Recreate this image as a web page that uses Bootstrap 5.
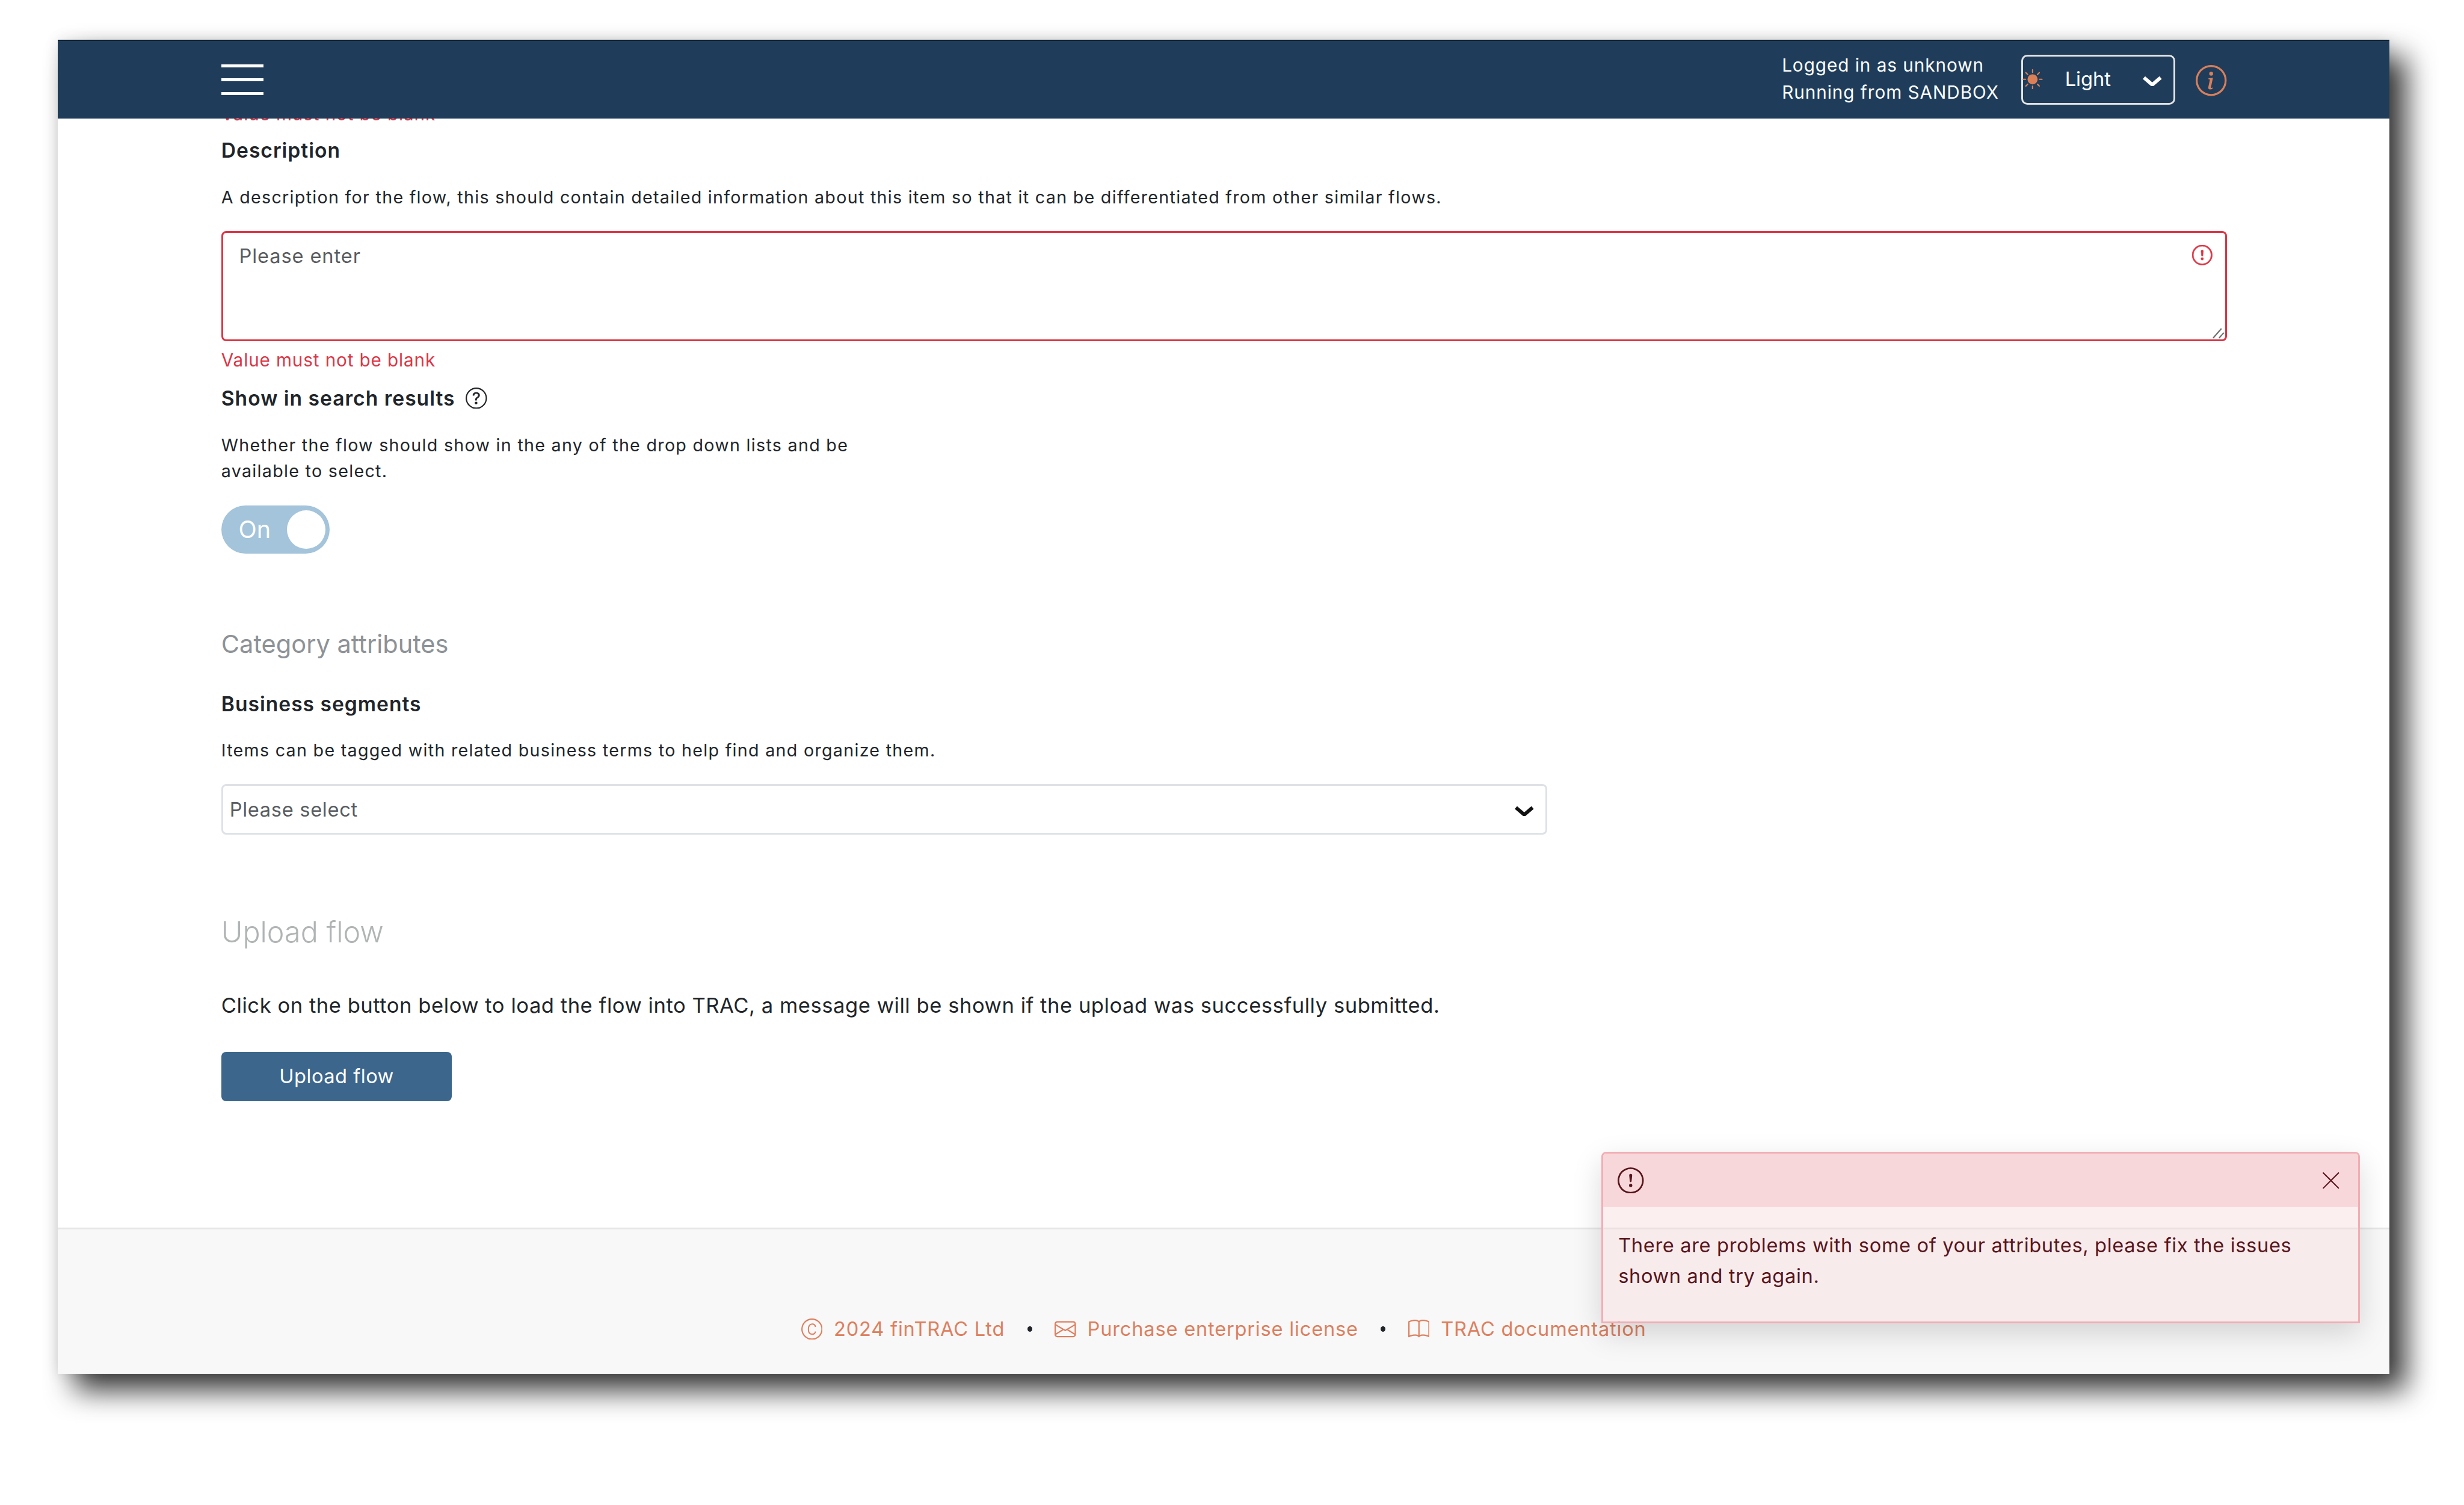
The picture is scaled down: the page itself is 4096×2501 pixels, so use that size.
<!DOCTYPE html>
<html lang="en">
<head>
<meta charset="utf-8">
<title>Upload flow</title>
<link href="https://cdn.jsdelivr.net/npm/bootstrap@5.3.0/dist/css/bootstrap.min.css" rel="stylesheet">
<style>
html,body{height:100%;}
body{zoom:.98866;background:#fff;font-family:Inter,"Liberation Sans",sans-serif;color:#212529;overflow:hidden;padding:67px 0 0 97px;font-size:28px;}
.app-win{width:3921px;height:2242px;background:#fff;box-shadow:28px 28px 46px rgba(0,0,0,.8),0 0 22px rgba(0,0,0,.1);}
.top-bar{height:132px;background:#1f3d5a;border-top:2.1px solid #0d1f30;padding:0 274px 0 275px;flex:none;z-index:2;}
.burger{width:71px;gap:18px;}
.burger span{height:5.1px;background:#fff;display:block;}
.user-info{color:#fff;font-size:30px;line-height:46px;margin:-3px 38px 0 0;letter-spacing:1px;}
.theme-btn{width:258px;height:84px;border:3.1px solid #e3e3e3;border-radius:10px;color:#fff;font-size:33px;padding:0;margin-right:35px;position:relative;}
.theme-sun{position:absolute;left:-1px;top:21px;width:34px;height:34px;fill:#dd7f56;}
.theme-label{margin-left:70px;margin-top:-2px;}
.theme-chev{position:absolute;left:201px;top:32px;width:32px;height:18px;fill:none;stroke:#fff;stroke-width:6;}
.info-ico{width:52px;height:52px;fill:#d97f5a;display:block;margin-top:3px;}
.page-body{padding:0 274px 0 275px;overflow:hidden;min-height:0;}
.cut-msg{color:#dc3545;font-size:30px;letter-spacing:.9px;line-height:44px;margin-top:-29px;}
.fld-title{font-size:34px;letter-spacing:1px;font-weight:600;line-height:44px;}
.fld-help{font-size:29px;line-height:44px;letter-spacing:1.3px;}
.t-desc{margin-top:17px;}
.h-desc{margin-top:35px;}
.area-wrap{margin-top:34px;height:186px;}
.area-wrap .form-control{height:186px;border:3.1px solid #dc3545;border-radius:8px;background-image:none;font-size:33px;letter-spacing:.9px;padding:15px 27px;box-shadow:none;resize:none;}
.area-wrap .form-control::placeholder{color:#595c5f;}
.area-ico{position:absolute;right:24px;top:24px;width:34px;height:34px;fill:#dc3545;stroke:#dc3545;stroke-width:.3;}
.area-grip{position:absolute;right:3px;bottom:5px;width:22px;height:18px;fill:none;stroke:#6f6f6f;stroke-width:2.2;}
.err-msg{color:#dc3545;font-size:30px;letter-spacing:.9px;line-height:44px;margin-top:10px;}
.t-show{margin-top:19px;gap:18px;}
.q-ico{width:36px;height:36px;fill:#212529;}
.h-show{margin-top:35px;max-width:1120px;}
.pill{width:182px;height:81px;border-radius:41px;background:#a3c4da;color:#fff;font-size:40px;margin-top:36px;padding:0 7px 0 29px;}
.pill-knob{width:65px;height:65px;border-radius:50%;background:#fff;}
.sect-title{font-size:42px;line-height:60px;color:#8d9296;margin-top:122px;font-weight:400;}
.t-biz{margin-top:48px;}
.h-biz{margin-top:34px;}
.sel-wrap{margin-top:35px;width:2230px;height:85px;}
.sel-wrap .form-select{height:85px;border:3.1px solid #dee2e6;border-radius:8px;font-size:33px;letter-spacing:.7px;padding:0 11px;background-image:none;color:#595c5f;}
.sel-chev{position:absolute;right:23px;top:36px;width:32px;height:18px;fill:none;stroke:#111;stroke-width:6;}
.up-title{font-size:49px;line-height:70px;color:#b0b4b4;margin-top:128px;font-weight:300;}
.up-help{font-size:35px;line-height:56px;margin-top:61px;letter-spacing:.53px;}
.up-btn{width:388px;height:83px;margin-top:50px;background:#3c668c;border:0;border-radius:8px;color:#fff;font-size:33px;letter-spacing:.5px;padding:0;}
.foot{height:246px;background:#f8f8f8;border-top:3.1px solid #e6e6e6;padding-top:93px;flex:none;color:#dd7f5f;font-size:33px;letter-spacing:.8px;}
.foot-link{color:#dd7f5f;text-decoration:none;gap:19px;}
.foot-ico{width:36px;height:36px;fill:#dd7f5f;}
.foot-dot{width:8px;height:9px;border-radius:50%;background:#212529;margin:0 38px;}
.alert-toast{position:absolute;left:2596px;top:1869px;width:1275px;height:288px;border:3.1px solid #f1aeb5;border-radius:8px 8px 0 0;background:rgba(248,215,218,.4);color:#58151c;font-size:33px;letter-spacing:.65px;box-shadow:0 18px 50px rgba(0,0,0,.15);}
.alert-toast .toast-header{height:90px;background:#f8d7da;color:#58151c;border:0;padding:0 24px;border-radius:5px 5px 0 0;}
.alert-toast .toast-body{padding:38px 24px 37px 25px;line-height:52px;}
.toast-ico{width:44px;height:44px;fill:#58151c;}
.toast-x{width:40px;height:40px;fill:#58151c;margin-right:2px;}
</style>
</head>
<body>
<div class="app-win d-flex flex-column position-relative">
  <nav class="top-bar d-flex align-items-center">
    <div class="burger d-flex flex-column"><span></span><span></span><span></span></div>
    <div class="ms-auto user-info"><div>Logged in as unknown</div><div>Running from SANDBOX</div></div>
    <button type="button" class="btn theme-btn d-flex align-items-center">
      <svg class="theme-sun" viewBox="0 0 16 16"><path d="M8 12a4 4 0 1 0 0-8 4 4 0 0 0 0 8zM8 0a.5.5 0 0 1 .5.5v2a.5.5 0 0 1-1 0v-2A.5.5 0 0 1 8 0zm0 13a.5.5 0 0 1 .5.5v2a.5.5 0 0 1-1 0v-2A.5.5 0 0 1 8 13zm8-5a.5.5 0 0 1-.5.5h-2a.5.5 0 0 1 0-1h2a.5.5 0 0 1 .5.5zM3 8a.5.5 0 0 1-.5.5h-2a.5.5 0 0 1 0-1h2A.5.5 0 0 1 3 8zm10.657-5.657a.5.5 0 0 1 0 .707l-1.414 1.415a.5.5 0 1 1-.707-.708l1.414-1.414a.5.5 0 0 1 .707 0zm-9.193 9.193a.5.5 0 0 1 0 .707L3.05 13.657a.5.5 0 0 1-.707-.707l1.414-1.414a.5.5 0 0 1 .707 0zm9.193 2.121a.5.5 0 0 1-.707 0l-1.414-1.414a.5.5 0 0 1 .707-.707l1.414 1.414a.5.5 0 0 1 0 .707zM4.464 4.465a.5.5 0 0 1-.707 0L2.343 3.05a.5.5 0 1 1 .707-.707l1.414 1.414a.5.5 0 0 1 0 .708z"/></svg>
      <span class="theme-label">Light</span>
      <svg class="theme-chev" viewBox="0 0 32 18"><path d="M2 3l14 12L30 3"/></svg>
    </button>
    <svg class="info-ico" viewBox="0 0 16 16"><path d="M8 15A7 7 0 1 1 8 1a7 7 0 0 1 0 14zm0 1A8 8 0 1 0 8 0a8 8 0 0 0 0 16z"/><path d="m8.93 6.588-2.29.287-.082.416.45.083c.294.07.352.176.288.469l-.738 3.468c-.194.897.105 1.319.808 1.319.545 0 1.178-.252 1.465-.598l.088-.416c-.2.176-.492.246-.686.246-.275 0-.375-.193-.304-.533L8.93 6.588zM9 4.5a1 1 0 1 1-2 0 1 1 0 0 1 2 0z"/></svg>
  </nav>

  <main class="page-body flex-fill">
    <div class="cut-msg">Value must not be blank</div>
    <div class="fld-title t-desc">Description</div>
    <div class="fld-help h-desc">A description for the flow, this should contain detailed information about this item so that it can be differentiated from other similar flows.</div>
    <div class="area-wrap position-relative">
      <textarea class="form-control is-invalid" placeholder="Please enter"></textarea>
      <svg class="area-ico" viewBox="0 0 16 16"><path d="M8 15A7 7 0 1 1 8 1a7 7 0 0 1 0 14zm0 1A8 8 0 1 0 8 0a8 8 0 0 0 0 16z"/><path d="M7.002 11a1 1 0 1 1 2 0 1 1 0 0 1-2 0zM7.1 4.995a.905.905 0 1 1 1.8 0l-.35 3.507a.552.552 0 0 1-1.1 0L7.1 4.995z"/></svg>
      <svg class="area-grip" viewBox="0 0 22 18"><path d="M2 17L16 1M12 17L20 8"/></svg>
    </div>
    <div class="err-msg">Value must not be blank</div>
    <div class="fld-title t-show d-flex align-items-center">Show in search results
      <svg class="q-ico" viewBox="0 0 16 16"><path d="M8 15A7 7 0 1 1 8 1a7 7 0 0 1 0 14zm0 1A8 8 0 1 0 8 0a8 8 0 0 0 0 16z"/><path d="M5.255 5.786a.237.237 0 0 0 .241.247h.825c.138 0 .248-.113.266-.25.09-.656.54-1.134 1.342-1.134.686 0 1.314.343 1.314 1.168 0 .635-.374.927-.965 1.371-.673.489-1.206 1.06-1.168 1.987l.003.217a.25.25 0 0 0 .25.246h.811a.25.25 0 0 0 .25-.25v-.105c0-.718.273-.927 1.01-1.486.609-.463 1.244-.977 1.244-2.056 0-1.511-1.276-2.241-2.673-2.241-1.267 0-2.655.59-2.75 2.286zm1.557 5.763c0 .533.425.927 1.01.927.609 0 1.028-.394 1.028-.927 0-.552-.42-.94-1.029-.94-.584 0-1.009.388-1.009.94z"/></svg>
    </div>
    <div class="fld-help h-show">Whether the flow should show in the any of the drop down lists and be available to select.</div>
    <div class="pill d-flex align-items-center justify-content-between"><span>On</span><span class="pill-knob"></span></div>
    <div class="sect-title">Category attributes</div>
    <div class="fld-title t-biz">Business segments</div>
    <div class="fld-help h-biz">Items can be tagged with related business terms to help find and organize them.</div>
    <div class="sel-wrap position-relative">
      <select class="form-select"><option>Please select</option></select>
      <svg class="sel-chev" viewBox="0 0 32 18"><path d="M2 3l14 12L30 3"/></svg>
    </div>
    <div class="up-title">Upload flow</div>
    <div class="up-help">Click on the button below to load the flow into TRAC, a message will be shown if the upload was successfully submitted.</div>
    <button type="button" class="btn up-btn d-block">Upload flow</button>
  </main>

  <footer class="foot d-flex justify-content-center align-items-center">
    <span class="foot-link d-flex align-items-center">
      <svg class="foot-ico" viewBox="0 0 16 16"><path d="M8 15A7 7 0 1 1 8 1a7 7 0 0 1 0 14zm0 1A8 8 0 1 0 8 0a8 8 0 0 0 0 16z"/><path d="M10.6 6.3C10.4 5 9.4 4.2 8.1 4.2 6.4 4.2 5.3 5.6 5.3 8s1.1 3.8 2.8 3.8c1.3 0 2.3-.8 2.5-2.1" fill="none" stroke="#dd7f5f" stroke-width=".9"/></svg>
      2024 finTRAC Ltd</span>
    <span class="foot-dot"></span>
    <a class="foot-link d-flex align-items-center" href="#">
      <svg class="foot-ico" viewBox="0 0 16 16"><path d="M0 4a2 2 0 0 1 2-2h12a2 2 0 0 1 2 2v8a2 2 0 0 1-2 2H2a2 2 0 0 1-2-2V4Zm2-1a1 1 0 0 0-1 1v.217l7 4.2 7-4.2V4a1 1 0 0 0-1-1H2Zm13 2.383-4.708 2.825L15 11.105V5.383Zm-.034 6.876-5.64-3.471L8 9.583l-1.326-.795-5.64 3.47A1 1 0 0 0 2 13h12a1 1 0 0 0 .966-.741ZM1 11.105l4.708-2.897L1 5.383v5.722Z"/></svg>
      Purchase enterprise license</a>
    <span class="foot-dot"></span>
    <a class="foot-link d-flex align-items-center" href="#">
      <svg class="foot-ico" viewBox="0 0 16 16"><path d="M1 2.828c.885-.37 2.154-.769 3.388-.893 1.33-.134 2.458.063 3.112.752v9.746c-.935-.53-2.12-.603-3.213-.493-1.18.12-2.37.461-3.287.811V2.828zm7.5-.141c.654-.689 1.782-.886 3.112-.752 1.234.124 2.503.523 3.388.893v9.923c-.918-.35-2.107-.692-3.287-.81-1.094-.111-2.278-.039-3.213.492V2.687zM8 1.783C7.015.936 5.587.81 4.287.94c-1.514.153-3.042.672-3.994 1.105A.5.5 0 0 0 0 2.5v11a.5.5 0 0 0 .707.455c.882-.4 2.303-.881 3.68-1.02 1.409-.142 2.59.087 3.223.877a.5.5 0 0 0 .78 0c.633-.79 1.814-1.019 3.222-.877 1.378.139 2.8.62 3.681 1.02A.5.5 0 0 0 16 13.5v-11a.5.5 0 0 0-.293-.455c-.952-.433-2.48-.952-3.994-1.105C10.413.809 8.985.936 8 1.783z"/></svg>
      TRAC documentation</a>
  </footer>

  <div class="toast show alert-toast" role="alert">
    <div class="toast-header d-flex justify-content-between align-items-center">
      <svg class="toast-ico" viewBox="0 0 16 16"><path d="M8 15A7 7 0 1 1 8 1a7 7 0 0 1 0 14zm0 1A8 8 0 1 0 8 0a8 8 0 0 0 0 16z"/><path d="M7.002 11a1 1 0 1 1 2 0 1 1 0 0 1-2 0zM7.1 4.995a.905.905 0 1 1 1.8 0l-.35 3.507a.552.552 0 0 1-1.1 0L7.1 4.995z"/></svg>
      <svg class="toast-x" viewBox="0 0 16 16"><path d="M2.6 2.6a.4.4 0 0 1 .6 0L8 7.4l4.8-4.8a.4.4 0 0 1 .6.6L8.6 8l4.8 4.8a.4.4 0 0 1-.6.6L8 8.6l-4.8 4.8a.4.4 0 0 1-.6-.6L7.4 8 2.6 3.2a.4.4 0 0 1 0-.6z"/></svg>
    </div>
    <div class="toast-body">There are problems with some of your attributes, please fix the issues shown and try again.</div>
  </div>
</div>
<script src="https://cdn.jsdelivr.net/npm/bootstrap@5.3.0/dist/js/bootstrap.bundle.min.js"></script>
</body>
</html>
